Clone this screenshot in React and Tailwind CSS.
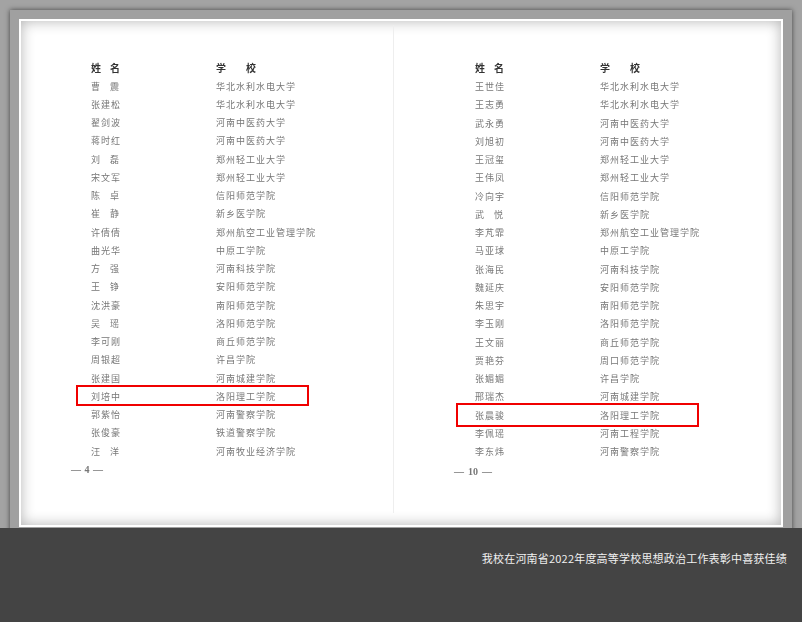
/**
 * App.jsx
 * Scanned two-page name list in a grey frame, with a dark caption bar below.
 */

const LEFT_ROWS = [
  ['曹震', '华北水利水电大学'],
  ['张建松', '华北水利水电大学'],
  ['翟剑波', '河南中医药大学'],
  ['蒋时红', '河南中医药大学'],
  ['刘磊', '郑州轻工业大学'],
  ['宋文军', '郑州轻工业大学'],
  ['陈卓', '信阳师范学院'],
  ['崔静', '新乡医学院'],
  ['许倩倩', '郑州航空工业管理学院'],
  ['曲光华', '中原工学院'],
  ['方强', '河南科技学院'],
  ['王铮', '安阳师范学院'],
  ['沈洪豪', '南阳师范学院'],
  ['吴瑶', '洛阳师范学院'],
  ['李可刚', '商丘师范学院'],
  ['周银超', '许昌学院'],
  ['张建国', '河南城建学院'],
  ['刘培中', '洛阳理工学院'],
  ['郭紫怡', '河南警察学院'],
  ['张俊豪', '铁道警察学院'],
  ['汪洋', '河南牧业经济学院'],
]

const RIGHT_ROWS = [
  ['王世佳', '华北水利水电大学'],
  ['王志勇', '华北水利水电大学'],
  ['武永勇', '河南中医药大学'],
  ['刘旭初', '河南中医药大学'],
  ['王冠玺', '郑州轻工业大学'],
  ['王伟凤', '郑州轻工业大学'],
  ['冷向宇', '信阳师范学院'],
  ['武悦', '新乡医学院'],
  ['李芃霏', '郑州航空工业管理学院'],
  ['马亚球', '中原工学院'],
  ['张海民', '河南科技学院'],
  ['魏延庆', '安阳师范学院'],
  ['朱思宇', '南阳师范学院'],
  ['李玉刚', '洛阳师范学院'],
  ['王文丽', '商丘师范学院'],
  ['贾艳芬', '周口师范学院'],
  ['张媚媚', '许昌学院'],
  ['邢瑞杰', '河南城建学院'],
  ['张晨骏', '洛阳理工学院'],
  ['李佩瑶', '河南工程学院'],
  ['李东炜', '河南警察学院'],
]

// Two-character names stretch to the same width as three-character ones
function Name({ value }) {
  return (
    <span className="flex w-[29px] justify-between">
      {[...value].map((ch, i) => (
        <span key={i}>{ch}</span>
      ))}
    </span>
  )
}

function Row({ name, school }) {
  return (
    <li className="flex h-[18.25px] items-center text-[9px] leading-none tracking-[1px] text-[#777777]">
      <span className="w-[125px] shrink-0">
        <Name value={name} />
      </span>
      <span className="whitespace-nowrap">{school}</span>
    </li>
  )
}

function Header() {
  return (
    <div className="flex h-[18px] items-center text-[10px] leading-none font-bold text-[#333]">
      <span className="w-[125px] shrink-0">
        <Name value="姓名" />
      </span>
      <span className="flex w-[40px] justify-between">
        <span>学</span>
        <span>校</span>
      </span>
    </div>
  )
}

function Sheet({ rows, page, pageClass, className, listClass, markClass }) {
  return (
    <div className={className}>
      <Header />
      <ul className={listClass}>
        {rows.map(([name, school]) => (
          <Row key={name} name={name} school={school} />
        ))}
        <div className={markClass} />
      </ul>
      <p className={pageClass}>
        <span>—</span>
        <span>{page}</span>
        <span>—</span>
      </p>
    </div>
  )
}

export default function App() {
  return (
    <div className="flex h-[622px] w-[802px] flex-col overflow-hidden bg-[#a3a3a3] font-['Noto_Sans_CJK_SC','Noto_Sans',sans-serif]">
      <div className="min-h-0 flex-1 px-[10px] pt-[10px]">
        <div className="h-[540px] bg-[#a0a0a0] pt-[9px] pr-[9px] pl-[9px] shadow-[0_0_5px_rgba(0,0,0,0.6)]">
          <div className="h-[508px] border-2 border-white bg-white shadow-[inset_0_0_14px_rgba(0,0,0,0.3)]">
            <div className="flex h-full pt-[4px] pb-[12px] blur-[0.5px]">
              <Sheet
                rows={LEFT_ROWS}
                page="4"
                className="w-[373px] border-r border-[#eeeeee] pt-[34px] pl-[70px]"
                listClass="relative"
                pageClass="-ml-[20px] mt-[1px] flex w-[32px] items-center justify-between font-['Liberation_Serif',serif] text-[10px] leading-[18px] font-bold text-[#777]"
                markClass="absolute top-[308px] -left-[15px] h-[21px] w-[233px] border-2 border-[#f00000]"
              />
              <Sheet
                rows={RIGHT_ROWS}
                page="10"
                className="flex-1 pt-[34px] pl-[81px]"
                listClass="relative pt-[0.5px]"
                pageClass="-ml-[21px] mt-[2px] flex w-[38px] items-center justify-between font-['Liberation_Serif',serif] text-[10px] leading-[18px] font-bold text-[#777]"
                markClass="absolute top-[326px] -left-[19px] h-[24px] w-[243px] border-2 border-[#f00000]"
              />
            </div>
          </div>
        </div>
      </div>
      <footer className="flex h-[94px] shrink-0 justify-end bg-[#444444] pt-[22px] pr-[15px]">
        <p className="text-[11px] leading-[16px] tracking-[0.2px] whitespace-nowrap text-[#f0f0f0]">
          我校在河南省2022年度高等学校思想政治工作表彰中喜获佳绩
        </p>
      </footer>
    </div>
  )
}
